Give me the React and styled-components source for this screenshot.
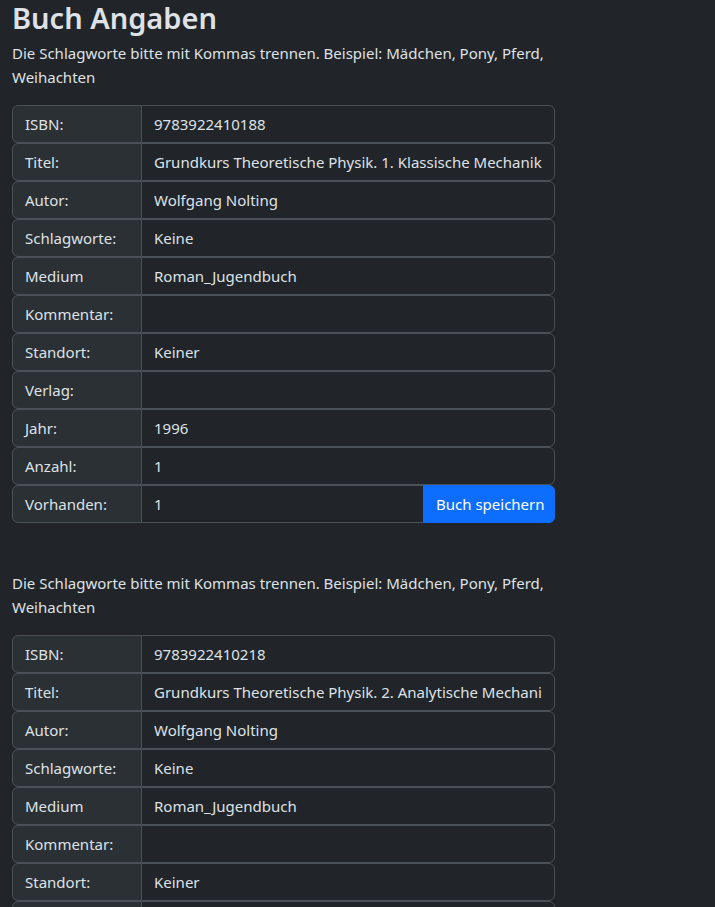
import React from 'react';
import styled, {createGlobalStyle} from 'styled-components';

const Global = createGlobalStyle`
  html, body {
    margin: 0;
    background: #212529;
    color: #dee2e6;
    font-family: "Noto Sans", "Open Sans", sans-serif;
    font-size: 15px;
    line-height: 24px;
  }
  * { box-sizing: border-box; }
`;

const Page = styled.div`
  padding: 0 12px;
`;

const Heading = styled.h1`
  font-size: 29px;
  font-weight: 600;
  line-height: 36px;
  margin: 0 0 5px;
`;

const Section = styled.section`
  width: 543px;
  margin-bottom: 48px;
`;

const Hint = styled.p`
  margin: 0 0 16px;
`;

const Group = styled.div`
  display: flex;
  height: 38px;
`;

const Label = styled.span`
  width: 130px;
  flex: none;
  padding: 6px 12px;
  background: #2b3035;
  border: 1px solid #495057;
  border-radius: 6px 0 0 6px;
  white-space: nowrap;
`;

const Field = styled.input`
  flex: 1;
  min-width: 0;
  margin-left: -1px;
  padding: 6px 12px;
  background: #212529;
  color: #dee2e6;
  font: inherit;
  border: 1px solid #495057;
  border-radius: ${p => (p.$last ? '0' : '0 6px 6px 0')};
  outline: none;
`;

const SaveButton = styled.button`
  width: 132px;
  flex: none;
  margin-left: -1px;
  padding: 6px 12px;
  background: #0d6efd;
  border: 1px solid #0d6efd;
  border-radius: 0 6px 6px 0;
  color: #fff;
  font: inherit;
  white-space: nowrap;
  cursor: pointer;
`;

const books = [
  {
    isbn: '9783922410188',
    titel: 'Grundkurs Theoretische Physik. 1. Klassische Mechanik',
  },
  {
    isbn: '9783922410218',
    titel: 'Grundkurs Theoretische Physik. 2. Analytische Mechanik',
  },
];

const rowsFor = book => [
  ['ISBN:', book.isbn],
  ['Titel:', book.titel],
  ['Autor:', 'Wolfgang Nolting'],
  ['Schlagworte:', 'Keine'],
  ['Medium', 'Roman_Jugendbuch'],
  ['Kommentar:', ''],
  ['Standort:', 'Keiner'],
  ['Verlag:', ''],
  ['Jahr:', '1996'],
  ['Anzahl:', '1'],
];

const BookForm = ({book}) => (
  <Section>
    <Hint>Die Schlagworte bitte mit Kommas trennen. Beispiel: Mädchen, Pony, Pferd, Weihachten</Hint>
    {rowsFor(book).map(([label, value]) => (
      <Group key={label}>
        <Label>{label}</Label>
        <Field readOnly defaultValue={value} />
      </Group>
    ))}
    <Group>
      <Label>Vorhanden:</Label>
      <Field readOnly defaultValue="1" $last />
      <SaveButton>Buch speichern</SaveButton>
    </Group>
  </Section>
);

const App = () => (
  <Page>
    <Global />
    <Heading>Buch Angaben</Heading>
    {books.map(b => <BookForm key={b.isbn} book={b} />)}
  </Page>
);

export default App;
